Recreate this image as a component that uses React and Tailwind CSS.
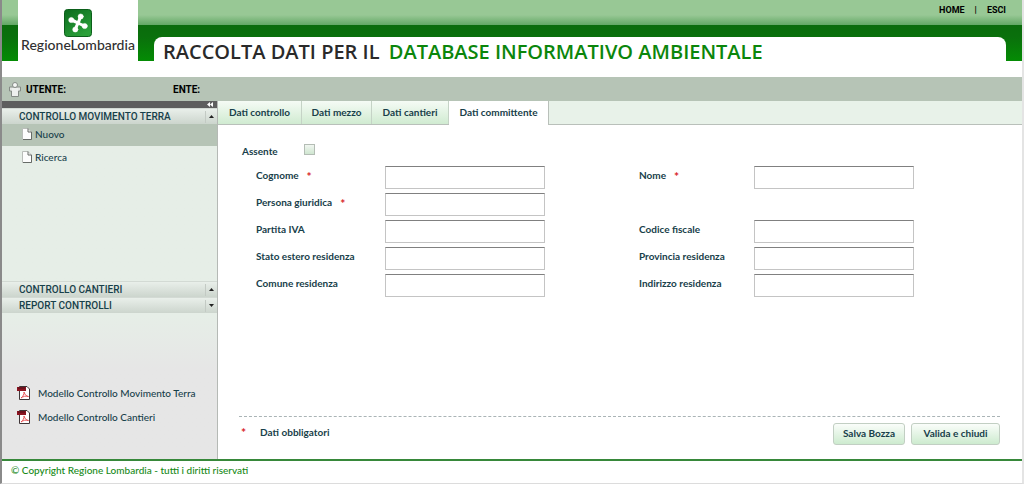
const tabs = [
  { label: 'Dati controllo', width: 'w-[84px]' },
  { label: 'Dati mezzo', width: 'w-[70px]' },
  { label: 'Dati cantieri', width: 'w-[77px]' },
];

const leftFields = [
  { id: 'cognome', label: 'Cognome', required: true },
  { id: 'giuridica', label: 'Persona giuridica', required: true },
  { id: 'iva', label: 'Partita IVA' },
  { id: 'stato', label: 'Stato estero residenza' },
  { id: 'comune', label: 'Comune residenza' },
];

const rightFields = [
  { id: 'nome', label: 'Nome', required: true },
  null,
  { id: 'fiscale', label: 'Codice fiscale' },
  { id: 'provincia', label: 'Provincia residenza' },
  { id: 'indirizzo', label: 'Indirizzo residenza' },
];

function Field({ field, labelWidth }) {
  if (!field) return <div className="h-[23px]" />;
  return (
    <div className="flex h-[23px]">
      <label htmlFor={field.id} className={`${labelWidth} flex h-[18px] shrink-0 items-center gap-2 whitespace-nowrap`}>
        {field.label}
        {field.required && <span className="pt-1 text-xs leading-3 text-[#d8232a]">*</span>}
      </label>
      <input
        id={field.id}
        type="text"
        className="h-[23px] w-40 border border-[#c4c4c4] border-t-[#808080] bg-white px-1 outline-none"
      />
    </div>
  );
}

function Rose() {
  return (
    <svg viewBox="0 0 28 28" className="h-7 w-7" aria-hidden="true">
      <defs>
        <linearGradient id="rose" x1="0" y1="0" x2="0.6" y2="1">
          <stop offset="0" stopColor="#0a6a1c" />
          <stop offset="1" stopColor="#2ba03a" />
        </linearGradient>
      </defs>
      <rect x="0.5" y="0.5" width="27" height="27" rx="3" fill="url(#rose)" stroke="#0b5f1a" />
      <g stroke="#fff" strokeLinecap="round" fill="#fff">
        <path d="M16.500 7.500Q15.500 11 14 14Q12.500 17 11.500 20.500" fill="none" strokeWidth="3" />
        <path d="M7.500 11Q11 12.500 14 14Q17 15.500 20.500 17" fill="none" strokeWidth="3" />
        <circle cx="16.700" cy="7.500" r="2.600" strokeWidth="0.500" />
        <circle cx="11.300" cy="20.500" r="2.600" strokeWidth="0.500" />
        <circle cx="7.300" cy="11" r="2.600" strokeWidth="0.500" />
        <circle cx="20.700" cy="17" r="2.600" strokeWidth="0.500" />
      </g>
    </svg>
  );
}

function Person() {
  return (
    <svg viewBox="0 0 12 15" className="h-[15px] w-3" aria-hidden="true">
      <path d="M0.500 5H11.500V9H9.500V14.500H2.500V9H0.500Z" fill="#e4e7e4" stroke="#858b86" />
      <circle cx="6" cy="3" r="2.500" fill="#f6f7f6" stroke="#858b86" />
      <path d="M3 6H9V14H3Z" fill="#eef0ee" />
    </svg>
  );
}

function Page() {
  return (
    <svg viewBox="0 0 10 12" className="h-3 w-2.5" aria-hidden="true">
      <path d="M0.500 0.500H6L9.500 4V11.500H0.500Z" fill="#fdfdfd" stroke="#b9bdb9" />
      <path d="M6 0.500V4H9.500V11.500H1" fill="none" stroke="#666b67" />
    </svg>
  );
}

function Pdf() {
  return (
    <svg viewBox="0 0 13 14" className="h-3.5 w-[13px]" aria-hidden="true">
      <path d="M2.500 0.500H10L12.500 3V13.500H2.500Z" fill="#fff" stroke="#3f3537" />
      <path d="M0 1H9V5H0Z" fill="#8c1421" />
      <path d="M1 2H8" stroke="#4d101a" />
      <path d="M4 12C6 10.500 7.300 8 7 6C8 9 9.500 10.500 11.500 10.500C9 9.500 6 10.500 4 12" fill="none" stroke="#e5484d" strokeWidth="0.900" />
    </svg>
  );
}

function SectionHeader({ children, down }) {
  return (
    <button type="button" className="flex h-4 w-full items-center border-t border-[#d3dad4] bg-linear-to-b from-[#e9efea] to-[#ccd5cd] pl-[17px] text-left font-['Roboto',sans-serif] text-[10px] leading-[14px] font-medium">
      <span className="grow">{children}</span>
      <span className="flex h-3 w-3 items-center justify-center border-l border-[#c3cac4]">
        <svg viewBox="0 0 5 3" className="h-[3px] w-[5px]" aria-hidden="true">
          <path d={down ? 'M0 0H5L2.500 3Z' : 'M0 3H5L2.500 0Z'} fill="#222" />
        </svg>
      </span>
    </button>
  );
}

export default function App() {
  return (
    <div className="flex min-h-screen flex-col border-r-2 border-b border-l-2 border-r-[#e4e4e4] border-b-[#dcdcdc] border-l-[#8a8a8a] bg-white font-['Lato',sans-serif] text-[10px] leading-4 text-[#17404a]">
      <header className="flex h-[61px] bg-[linear-gradient(#98c895_0px,#98c895_15px,#62a865_25px,#0a6c0c_25px,#0a700c_37px,#048c04_61px)] pr-4 pl-4">
        <div className="flex h-[61px] w-[120px] shrink-0 flex-col items-center bg-white pt-[9px]">
          <Rose />
          <span className="text-[14px] leading-[15px] font-medium text-[#303030]">RegioneLombardia</span>
        </div>
        <div className="ml-4 flex grow flex-col justify-between">
          <nav className="flex h-[19px] items-center justify-end gap-2.5 font-['Roboto',sans-serif] text-[9px] font-bold text-black">
            <a href="#home">HOME</a>
            <span>|</span>
            <a href="#esci">ESCI</a>
          </nav>
          <h1 className="h-6 rounded-t-lg bg-white pl-[9px] font-['Open_Sans',sans-serif] text-[20px] leading-[30px] font-semibold whitespace-nowrap text-[#2a2a2a]">
            RACCOLTA DATI PER IL <span className="ml-1 text-[#0b860b]">DATABASE INFORMATIVO AMBIENTALE</span>
          </h1>
        </div>
      </header>

      <div className="mt-4 flex h-6 items-center bg-[#b6c4b6] pl-[7px] font-['Roboto',sans-serif] text-[10px] font-bold text-black">
        <Person />
        <span className="ml-[5px] w-[147px] pt-0.5">UTENTE:</span>
        <span className="pt-0.5">ENTE:</span>
      </div>

      <div className="flex grow">
        <aside className="flex w-[216px] shrink-0 flex-col border-r border-[#b5b9b5] bg-linear-to-b from-[#e6eee7] from-60% to-[#e6e6e6] to-75%">
          <div className="flex h-[7px] items-center justify-end bg-[#5e5e5e] pr-1">
            <svg viewBox="0 0 6 5" className="h-[5px] w-1.5" aria-hidden="true">
              <path d="M3 0V5L0 2.500ZM6 0V5L3 2.500Z" fill="#fff" />
            </svg>
          </div>
          <SectionHeader>CONTROLLO MOVIMENTO TERRA</SectionHeader>
          <div className="min-h-[157px]">
            <a href="#nuovo" className="flex h-[22px] items-center gap-[3px] bg-[#b6c4b6] pb-0.5 pl-5 font-medium"><Page />Nuovo</a>
            <a href="#ricerca" className="flex h-[22px] items-center gap-[3px] pl-5 font-medium"><Page />Ricerca</a>
          </div>
          <SectionHeader>CONTROLLO CANTIERI</SectionHeader>
          <SectionHeader down>REPORT CONTROLLI</SectionHeader>
          <div className="mt-auto flex flex-col gap-2 pb-[34px] pl-[15px] font-medium">
            <a href="#modello-terra" className="flex items-center gap-2 whitespace-nowrap"><Pdf />Modello Controllo Movimento Terra</a>
            <a href="#modello-cantieri" className="flex items-center gap-2 whitespace-nowrap"><Pdf />Modello Controllo Cantieri</a>
          </div>
        </aside>

        <main className="flex grow flex-col font-bold">
          <div role="tablist" className="flex h-6 border-b border-[#b9c0ba] bg-[#e8f2e9]">
            {tabs.map((tab) => (
              <button key={tab.label} type="button" role="tab" aria-selected="false" className={`${tab.width} h-[23px] border-r border-[#c5d3c6] bg-linear-to-b from-[#f5fbf5] to-[#d0ebd1] pb-0.5 text-center whitespace-nowrap`}>
                {tab.label}
              </button>
            ))}
            <button type="button" role="tab" aria-selected="true" className="h-6 w-[100px] border-r border-[#b9c0ba] bg-white pb-0.5 text-center whitespace-nowrap">
              Dati committente
            </button>
          </div>

          <form className="flex grow flex-col">
            <div className="flex items-start pt-[18px] pl-6">
              <label htmlFor="assente" className="w-[62px]">Assente</label>
              <input id="assente" type="checkbox" className="mt-px h-[11px] w-[11px] appearance-none border border-[#b4bdb5] bg-linear-to-b from-[#f1f6f1] to-[#cfe6d0]" />
            </div>
            <div className="grid grid-cols-2 pt-[7px] pl-[38px]">
              <div className="flex flex-col gap-1">
                {leftFields.map((field) => <Field key={field.id} field={field} labelWidth="w-[129px]" />)}
              </div>
              <div className="flex flex-col gap-1">
                {rightFields.map((field, i) => <Field key={i} field={field} labelWidth="w-[115px]" />)}
              </div>
            </div>
            <div className="mt-auto mr-[22px] ml-[21px] flex h-[43px] items-start justify-between border-t border-dashed border-[#aab4b6] pt-[6px]">
              <p className="flex gap-3.5 pl-0.5"><span className="pt-0.5 text-xs text-[#d8232a]">*</span>
                <span className="pt-px">Dati obbligatori</span>
              </p>
              <div className="flex gap-[6px]">
                <button type="button" className="h-[22px] w-[72px] rounded-[3px] border border-[#c2cfc3] bg-linear-to-b from-[#fafdfa] to-[#cdebcf] pb-0.5 whitespace-nowrap">Salva Bozza</button>
                <button type="button" className="h-[22px] w-[89px] rounded-[3px] border border-[#c2cfc3] bg-linear-to-b from-[#fafdfa] to-[#cdebcf] pb-0.5 whitespace-nowrap">Valida e chiudi</button>
              </div>
            </div>
          </form>
        </main>
      </div>

      <footer className="h-6 border-t-2 border-[#37883a] pt-px pl-[9px] font-medium text-[#178a17]">© Copyright Regione Lombardia - tutti i diritti riservati</footer>
    </div>
  );
}
